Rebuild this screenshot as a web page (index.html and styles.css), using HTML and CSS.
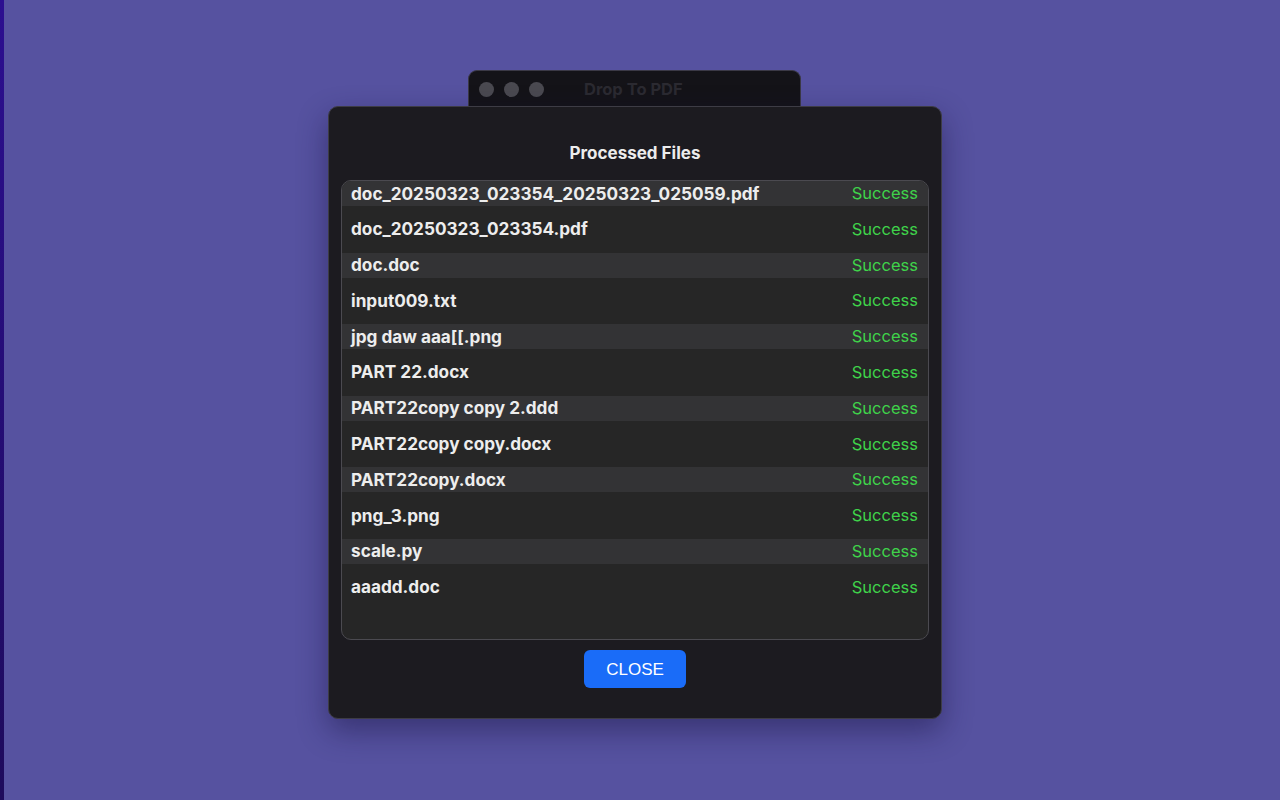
FILE: index.html
```html
<!DOCTYPE html>
<html lang="en">
<head>
<meta charset="utf-8">
<title>Drop To PDF</title>
<link rel="stylesheet" href="styles.css">
</head>
<body>
<div class="desktop">
  <div class="edge"></div>
  <div class="stack">
    <div class="backwin">
      <div class="lights">
        <span class="light"></span><span class="light"></span><span class="light"></span>
      </div>
      <div class="backtitle">Drop To PDF</div>
    </div>
    <div class="dialog">
      <div class="title">Processed Files</div>
      <div class="list">
        <div class="row alt"><span class="name">doc_20250323_023354_20250323_025059.pdf</span><span class="status">Success</span></div>
        <div class="row"><span class="name">doc_20250323_023354.pdf</span><span class="status">Success</span></div>
        <div class="row alt"><span class="name">doc.doc</span><span class="status">Success</span></div>
        <div class="row"><span class="name">input009.txt</span><span class="status">Success</span></div>
        <div class="row alt"><span class="name">jpg daw aaa[[.png</span><span class="status">Success</span></div>
        <div class="row"><span class="name">PART 22.docx</span><span class="status">Success</span></div>
        <div class="row alt"><span class="name">PART22copy copy 2.ddd</span><span class="status">Success</span></div>
        <div class="row"><span class="name">PART22copy copy.docx</span><span class="status">Success</span></div>
        <div class="row alt"><span class="name">PART22copy.docx</span><span class="status">Success</span></div>
        <div class="row"><span class="name">png_3.png</span><span class="status">Success</span></div>
        <div class="row alt"><span class="name">scale.py</span><span class="status">Success</span></div>
        <div class="row"><span class="name">aaadd.doc</span><span class="status">Success</span></div>
      </div>
      <div class="actions"><button class="close">CLOSE</button></div>
    </div>
  </div>
</div>
</body>
</html>
```

FILE: styles.css
```css
html, body {
  margin: 0;
  padding: 0;
  height: 100%;
}
body {
  background: #5652a0;
  font-family: Inter, "Noto Sans", "Liberation Sans", sans-serif;
  overflow: hidden;
}
.desktop {
  position: relative;
  width: 1280px;
  height: 800px;
  display: flex;
}
.edge {
  width: 4px;
  height: 800px;
  background: linear-gradient(#2c0f90, #1e0b5c);
  flex: none;
}
.stack {
  margin-left: 324px;
  padding-top: 70px;
  width: 614px;
  display: flex;
  flex-direction: column;
}
.backwin {
  margin-left: 140px;
  width: 331px;
  height: 35px;
  background: #141318;
  border: 1px solid #3b3946;
  border-bottom: none;
  border-radius: 9px 9px 0 0;
  display: flex;
  align-items: center;
  box-sizing: content-box;
}
.lights {
  display: flex;
  gap: 10px;
  margin-left: 10px;
  margin-top: 1px;
}
.light {
  width: 15px;
  height: 15px;
  border-radius: 50%;
  background: #4a4950;
}
.backtitle {
  margin-left: 40px;
  font-weight: 700;
  font-size: 16.5px;
  color: #2b2a31;
  margin-top: 0;
}
.dialog {
  box-sizing: border-box;
  width: 614px;
  height: 613px;
  background: #1c1b20;
  border: 1px solid #3d3c45;
  border-radius: 10px;
  padding: 36px 12px 30px;
  display: flex;
  flex-direction: column;
  box-shadow: 0 12px 30px rgba(20, 15, 60, 0.45);
}
.title {
  text-align: center;
  font-weight: 700;
  font-size: 17px;
  line-height: 20px;
  color: #ececec;
}
.list {
  margin-top: 17px;
  height: 460px;
  box-sizing: border-box;
  background: #262626;
  border: 1px solid #4b4a50;
  border-radius: 10px;
  overflow: hidden;
  display: flex;
  flex-direction: column;
}
.row {
  display: flex;
  justify-content: space-between;
  align-items: center;
  padding: 0 10px 0 9px;
  height: 46.6px;
  flex: none;
}
.row.alt {
  height: 25px;
  background: #333335;
}
.name {
  font-weight: 700;
  font-size: 17.2px;
  color: #ededed;
  margin-top: -1px;
}
.status {
  font-size: 16.5px;
  color: #3fd24a;
  margin-top: -1px;
}
.actions {
  display: flex;
  justify-content: center;
  margin-top: 10px;
}
.close {
  width: 102px;
  height: 38px;
  border: none;
  border-radius: 6px;
  background: #1a6cf8;
  color: #ffffff;
  font-family: "Liberation Sans", Arial, sans-serif;
  font-size: 17px;
  padding: 0;
  padding-top: 2px;
}
```
